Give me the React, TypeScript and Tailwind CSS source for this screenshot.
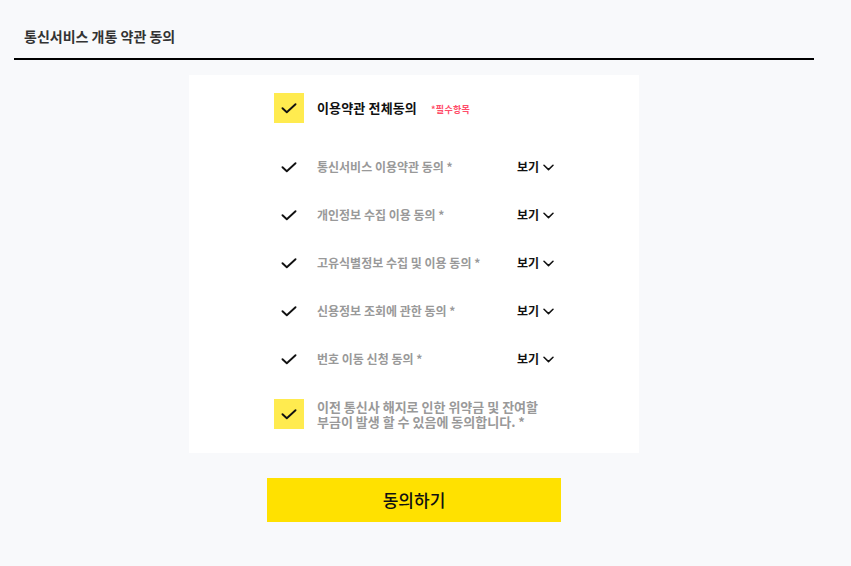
import React from "react";

const Check = ({ className = "" }: { className?: string }) => (
  <svg width="16" height="11" viewBox="0 0 16 11" className={className} fill="none">
    <path d="M1.5 5.2 L5.8 9.2 L14.5 1.2" stroke="#111" strokeWidth="1.9" strokeLinecap="round" strokeLinejoin="round" />
  </svg>
);

const Chevron = () => (
  <svg width="11" height="7" viewBox="0 0 11 7" fill="none">
    <path d="M1 1.2 L5.5 5.6 L10 1.2" stroke="#111" strokeWidth="1.5" strokeLinecap="round" strokeLinejoin="round" />
  </svg>
);

const rows = [
  "통신서비스 이용약관 동의 *",
  "개인정보 수집 이용 동의 *",
  "고유식별정보 수집 및 이용 동의 *",
  "신용정보 조회에 관한 동의 *",
  "번호 이동 신청 동의 *",
];

export default function App() {
  return (
    <div
      className="min-h-[566px] bg-[#f8f9fb] pb-[44px]"
      style={{ fontFamily: '"Noto Sans CJK KR", "Noto Sans", sans-serif' }}
    >
      <div className="ml-[14px] w-[800px]">
        <div className="border-b-2 border-black pl-[10px] pt-[26px] pb-[12px]">
          <h1 className="text-[14px] leading-[20px] font-bold text-[#333]">
            통신서비스 개통 약관 동의
          </h1>
        </div>

        <div className="mx-auto mt-[15px] w-[450px] bg-white pl-[85px] pt-[18px] pb-[24px]">
          <div className="flex items-center">
            <div className="flex h-[30px] w-[30px] items-center justify-center bg-[#ffeb4f]">
              <Check />
            </div>
            <div className="ml-[13px] flex items-baseline">
              <span className="text-[13px] font-bold text-[#111] tracking-[0.15px]">이용약관 전체동의</span>
              <span className="ml-[14px] text-[9px] font-bold text-[#ff4d6a] tracking-[0.3px]">*필수항목</span>
            </div>
          </div>

          <div className="mt-[20px] flex flex-col">
            {rows.map((r) => (
              <div key={r} className="flex h-[48px] items-center">
                <div className="flex w-[30px] items-center justify-center">
                  <Check />
                </div>
                <span className="ml-[13px] w-[200px] text-[12px] font-bold text-[#999]">
                  {r}
                </span>
                <button className="flex items-center gap-[4px] text-[12px] font-bold text-[#111]">
                  보기
                  <Chevron />
                </button>
              </div>
            ))}
          </div>

          <div className="mt-[16px] flex items-center">
            <div className="flex h-[30px] w-[30px] shrink-0 items-center justify-center bg-[#ffeb4f]">
              <Check />
            </div>
            <p className="ml-[13px] text-[13px] leading-[15px] font-bold text-[#999]">
              이전 통신사 해지로 인한 위약금 및 잔여할
              <br />
              부금이 발생 할 수 있음에 동의합니다. *
            </p>
          </div>
        </div>

        <button className="mx-auto mt-[25px] flex h-[44px] w-[294px] items-center justify-center bg-[#ffe100] text-[17px] font-medium text-[#111]">
          동의하기
        </button>
      </div>
    </div>
  );
}
